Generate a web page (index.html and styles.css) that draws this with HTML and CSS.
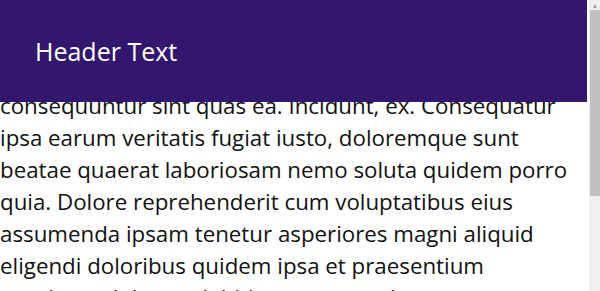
FILE: index.html
```html
<!DOCTYPE html>
<html lang="en">
<head>
  <meta charset="UTF-8" />
  <meta name="viewport" content="width=device-width, initial-scale=1.0"/>
  <title>Fixed Header</title>
  <link rel="stylesheet" href="styles.css">
</head>
<body>

  <header class="header">
    <h1>Header Text</h1>
  </header>

  <main class="content">
    <p>consequuntur sint quas ea. Incidunt, ex. Consequatur
      ipsa earum veritatis fugiat iusto, doloremque sunt
      beatae quaerat laboriosam nemo soluta quidem porro
      quia. Dolore reprehenderit cum voluptatibus eius
      assumenda ipsam tenetur asperiores magni aliquid
      eligendi doloribus quidem ipsa et praesentium
      possimus dolores, debitis tempora voluptates
      doloremque nobis. Quis iste illo adipisci ut dicta.</p>
  </main>

  <!-- fake scrollbar, headless hides the real one -->
  <div class="scrollbar">
    <div class="scroll-arrow">&#9652;</div>
    <div class="scroll-thumb"></div>
  </div>

</body>
</html>
```

FILE: styles.css
```css
html, body {
  overflow: hidden;
}

body {
  font-family: "Open Sans", sans-serif;
  margin: 0;
  padding: 0 12px 0 0;
  background: #ffffff;
  color: #111111;
}

.header {
  position: fixed;
  top: 0;
  left: 0;
  right: 13px;
  height: 102px;
  background: #33176e;
  color: white;
  display: flex;
  align-items: center;
  padding: 0 35px;
}

.header h1 {
  margin: 0;
  font-size: 25px;
  font-weight: normal;
}

.content {
  padding-top: 90px;
}

.content p {
  margin: 0;
  font-size: 22.3px;
  line-height: 32px;
  white-space: pre-line;
}

.scrollbar {
  position: fixed;
  top: 0;
  right: 0;
  bottom: 0;
  width: 11px;
  background: #f0f0f0;
  display: flex;
  flex-direction: column;
}

.scroll-arrow {
  height: 10px;
  font-size: 8px;
  line-height: 10px;
  text-align: center;
  color: #a3a3a3;
}

.scroll-thumb {
  height: 186px;
  margin-left: 1px;
  background: #c1c1c1;
}
```
